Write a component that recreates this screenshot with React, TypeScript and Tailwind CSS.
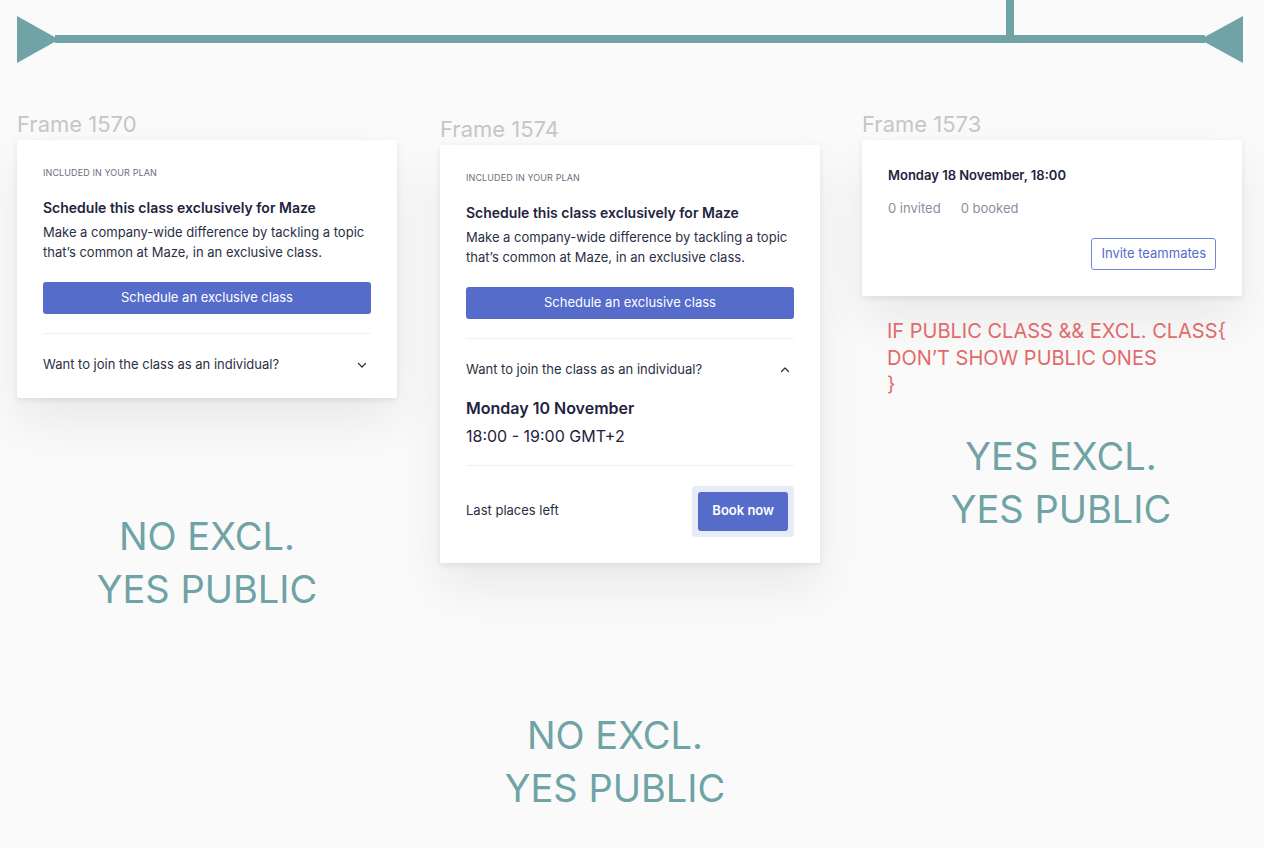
import React from 'react';

const teal = 'bg-[#70a3a6]';

const Chevron = ({ up = false }: { up?: boolean }) => (
  <svg width="12" height="12" viewBox="0 0 12 12" fill="none" className="shrink-0">
    <path
      d={up ? 'M2.5 7.5L6 4L9.5 7.5' : 'M2.5 4.5L6 8L9.5 4.5'}
      stroke="#2b2f45"
      strokeWidth="1.2"
      strokeLinecap="round"
      strokeLinejoin="round"
    />
  </svg>
);

const FrameLabel = ({ children }: { children: React.ReactNode }) => (
  <div className="text-[22px] leading-none text-[#c6c6c6] mb-[5px]">{children}</div>
);

const cardCls =
  'w-[380px] bg-white rounded-[2px] shadow-[0_2px_6px_rgba(0,0,0,0.08),0_24px_48px_rgba(0,0,0,0.07)]';

// Top part shared by both "exclusive" cards
const ExclusiveIntro = () => (
  <>
    <div className="text-[9px] tracking-[0.1px] text-[#6b6f80] uppercase leading-none">
      Included in your plan
    </div>
    <div className="mt-[22px] text-[14px] font-semibold text-[#1f2340] leading-[18px]">
      Schedule this class exclusively for Maze
    </div>
    <p className="mt-[6px] text-[13px] leading-[19.5px] text-[#2b2f45]">
      Make a company-wide difference by tackling a topic that’s common at Maze, in an exclusive
      class.
    </p>
    <button className="mt-[20px] w-full h-[32px] rounded-[3px] bg-[#566ccb] text-white text-[13px]">
      Schedule an exclusive class
    </button>
    <div className="mt-[19px] border-t border-[#eef0f5]" />
  </>
);

const App = () => {
  return (
    <div
      className="relative w-[1264px] h-[848px] overflow-hidden bg-[#fafafa]"
      style={{ fontFamily: 'Inter, "Noto Sans", sans-serif' }}
    >
      {/* timeline arrow */}
      <div className={`absolute left-[55px] top-[35px] w-[1150px] h-[8px] ${teal}`} />
      <div className={`absolute left-[1006px] top-0 w-[8px] h-[40px] ${teal}`} />
      <svg className="absolute left-[17px] top-[16px]" width="42" height="47" viewBox="0 0 42 47">
        <polygon points="0,0 42,23.5 0,47" fill="#70a3a6" />
      </svg>
      <svg className="absolute left-[1200px] top-[16px]" width="43" height="47" viewBox="0 0 43 47">
        <polygon points="43,0 0,23.5 43,47" fill="#70a3a6" />
      </svg>

      {/* Frame 1570 */}
      <div className="absolute left-[17px] top-[113px]">
        <FrameLabel>Frame 1570</FrameLabel>
        <div className={`${cardCls} px-[26px] pt-[28px] pb-[23px]`}>
          <ExclusiveIntro />
          <div className="mt-[21px] flex items-center justify-between pr-[3px]">
            <span className="text-[13px] text-[#2b2f45]">Want to join the class as an individual?</span>
            <Chevron />
          </div>
        </div>
      </div>

      {/* Frame 1574 */}
      <div className="absolute left-[440px] top-[118px]">
        <FrameLabel>Frame 1574</FrameLabel>
        <div className={`${cardCls} px-[26px] pt-[28px] pb-[26px]`}>
          <ExclusiveIntro />
          <div className="mt-[21px] flex items-center justify-between pr-[3px]">
            <span className="text-[13px] text-[#2b2f45]">Want to join the class as an individual?</span>
            <Chevron up />
          </div>
          <div className="mt-[18px] text-[16px] font-semibold text-[#1f2340] leading-[20px]">
            Monday 10 November
          </div>
          <div className="mt-[8px] text-[16px] text-[#1f2340] leading-[20px]">18:00 - 19:00 GMT+2</div>
          <div className="mt-[19px] border-t border-[#eef0f5]" />
          <div className="mt-[20px] flex items-center justify-between">
            <span className="text-[13px] text-[#2b2f45]">Last places left</span>
            <div className="p-[6px] rounded-[4px] bg-[#e8ebf8]">
              <button className="h-[39px] px-[14px] rounded-[3px] bg-[#566ccb] text-white text-[13px] font-semibold">
                Book now
              </button>
            </div>
          </div>
        </div>
      </div>

      {/* Frame 1573 */}
      <div className="absolute left-[862px] top-[113px]">
        <FrameLabel>Frame 1573</FrameLabel>
        <div className={`${cardCls} px-[26px] pt-[27px] pb-[26px]`}>
          <div className="text-[13px] font-semibold text-[#1f2340] leading-[16px]">
            Monday 18 November, 18:00
          </div>
          <div className="mt-[17px] flex gap-[20px] text-[13px] text-[#8a8ea0] leading-[16px]">
            <span>0 invited</span>
            <span>0 booked</span>
          </div>
          <div className="mt-[22px] flex justify-end">
            <button className="h-[32px] px-[9px] rounded-[3px] border border-[#7385d6] text-[#566ccb] text-[13px]">
              Invite teammates
            </button>
          </div>
        </div>
        <div className="mt-[22px] ml-[25px] text-[20px] leading-[26.5px] text-[#df6b6b]">
          <div>IF PUBLIC CLASS &amp;&amp; EXCL. CLASS{'{'}</div>
          <div>DON’T SHOW PUBLIC ONES</div>
          <div>{'}'}</div>
        </div>
      </div>

      {/* annotations */}
      <div className="absolute left-[57px] top-[510px] w-[300px] text-center text-[38px] leading-[53px] text-[#70a3a6]">
        <div>NO EXCL.</div>
        <div>YES PUBLIC</div>
      </div>
      <div className="absolute left-[911px] top-[430px] w-[300px] text-center text-[38px] leading-[53px] text-[#70a3a6]">
        <div>YES EXCL.</div>
        <div>YES PUBLIC</div>
      </div>
      <div className="absolute left-[465px] top-[709px] w-[300px] text-center text-[38px] leading-[53px] text-[#70a3a6]">
        <div>NO EXCL.</div>
        <div>YES PUBLIC</div>
      </div>
    </div>
  );
};

export default App;
